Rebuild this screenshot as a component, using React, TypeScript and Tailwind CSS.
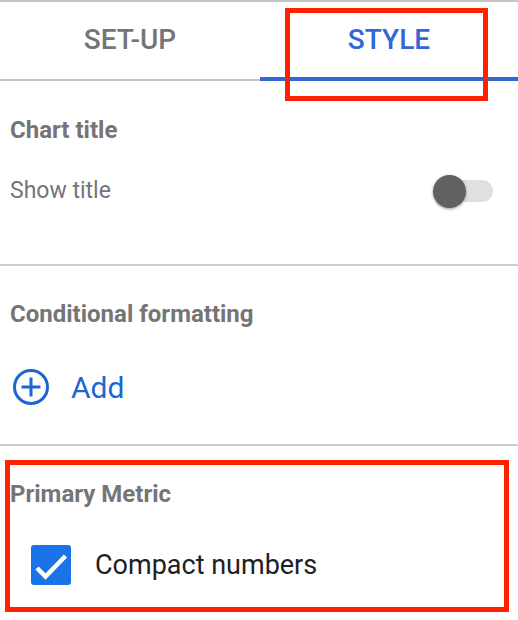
import React from "react";

function Toggle() {
  return (
    <div className="relative w-[60px] h-[34px] flex items-center">
      <div className="ml-[3px] w-[57px] h-[22px] rounded-full bg-[#e0e0e0]" />
      <div className="absolute left-0 top-[1px] w-[33px] h-[33px] rounded-full bg-[#616161] shadow-[0_1px_3px_rgba(0,0,0,0.4)]" />
    </div>
  );
}

export default function App() {
  return (
    <div
      className="relative w-[518px] h-[620px] bg-white border-t-2 border-[#c4c4c4] overflow-hidden"
      style={{ fontFamily: "Roboto, 'Liberation Sans', sans-serif" }}
    >
      {/* Tabs */}
      <div className="flex h-[79px]">
        <div className="w-[260px] flex items-center justify-center border-b-2 border-[#c4c4c4] pb-[1px]">
          <span className="text-[28px] font-medium text-[#757575] leading-none">SET-UP</span>
        </div>
        <div className="flex-1 flex items-center justify-center border-b-4 border-[#3367d6] pt-[1px]">
          <span className="text-[28px] font-medium text-[#3367d6] leading-none">STYLE</span>
        </div>
      </div>

      {/* Chart title */}
      <div className="px-[10px] pt-[37px] pb-[53px] border-b-2 border-[#cccccc]">
        <div className="h-[24px] leading-[24px] text-[24px] font-bold text-[#757575]">Chart title</div>
        <div className="mt-[29px] h-[40px] flex items-center justify-between pr-[15px]">
          <span className="text-[23px] text-[#757575]">Show title</span>
          <Toggle />
        </div>
      </div>

      {/* Conditional formatting */}
      <div className="px-[10px] pt-[36px] pb-[37px] border-b-2 border-[#cccccc]">
        <div className="h-[24px] leading-[24px] text-[24px] font-bold text-[#757575]">Conditional formatting</div>
        <div className="mt-[41px] h-[40px] flex items-center gap-[21px]">
          <svg width="40" height="40" viewBox="0 0 40 40" className="shrink-0">
            <circle cx="21" cy="20" r="16.5" fill="none" stroke="#1967d2" strokeWidth="3" />
            <path d="M21 10.5v19M11.5 20h19" stroke="#1967d2" strokeWidth="3" />
          </svg>
          <span className="text-[30px] text-[#1967d2]">Add</span>
        </div>
      </div>

      {/* Primary Metric */}
      <div className="px-[10px] pt-[36px]">
        <div className="h-[24px] leading-[24px] text-[24px] font-bold text-[#757575]">Primary Metric</div>
        <div className="mt-[39px] h-[40px] flex items-center gap-[24px] pl-[21px]">
          <div className="w-[40px] h-[40px] rounded-[3px] bg-[#1a73e8] flex items-center justify-center">
            <svg width="40" height="40" viewBox="0 0 40 40">
              <path d="M6 23l8.5 8.5L34.5 11" fill="none" stroke="#ffffff" strokeWidth="4.5" />
            </svg>
          </div>
          <span className="text-[27px] text-[#202124]">Compact numbers</span>
        </div>
      </div>

      {/* Annotation overlays */}
      <div className="absolute left-[285px] top-[6px] w-[203px] h-[93px] border-[5px] border-[#ff2200] pointer-events-none" />
      <div className="absolute left-[5px] top-[458px] w-[504px] h-[152px] border-[5px] border-[#ff2200] pointer-events-none" />
    </div>
  );
}
